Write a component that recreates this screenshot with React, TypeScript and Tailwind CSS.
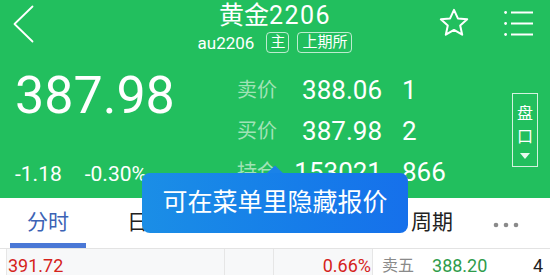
const QUOTES = [
  { label: '卖价', price: '388.06', vol: '1' },
  { label: '买价', price: '387.98', vol: '2' },
  { label: '持仓', price: '153021', vol: '866' },
]

const TABS = ['分时', '日K', '周K', '月K', '周期']

function BackIcon() {
  return (
    <svg width="22" height="38" viewBox="0 0 22 38" fill="none">
      <polyline points="19.5,1.5 1.5,19 19.5,36.5" stroke="white" strokeWidth="1.8" strokeLinecap="round" strokeLinejoin="round" />
    </svg>
  )
}

function StarIcon() {
  return (
    <svg width="32" height="30" viewBox="0 0 32 30" fill="none">
      <path
        d="M16 1.8 L19.9 10.4 L29.2 11.3 L22.2 17.5 L24.2 26.7 L16 21.9 L7.8 26.7 L9.8 17.5 L2.8 11.3 L12.1 10.4 Z"
        stroke="white"
        strokeWidth="2"
        strokeLinejoin="round"
      />
    </svg>
  )
}

function MenuIcon() {
  return (
    <svg width="30" height="26" viewBox="0 0 30 26" fill="none">
      <circle cx="1.6" cy="1.5" r="1.4" fill="white" />
      <circle cx="1.6" cy="12.5" r="1.4" fill="white" />
      <circle cx="1.6" cy="23.5" r="1.4" fill="white" />
      <line x1="7" y1="1.5" x2="29" y2="1.5" stroke="white" strokeWidth="2" />
      <line x1="7" y1="12.5" x2="29" y2="12.5" stroke="white" strokeWidth="2" />
      <line x1="7" y1="23.5" x2="29" y2="23.5" stroke="white" strokeWidth="2" />
    </svg>
  )
}

export default function App() {
  return (
    <div className="relative w-[550px] h-[275px] overflow-hidden bg-white [font-family:Roboto,'Noto_Sans_CJK_SC',sans-serif]">
      {/* 绿色行情头 */}
      <header className="h-[198px] bg-[#22bf5e] text-white">
        <div className="grid grid-cols-[1fr_auto_1fr] h-[60px]">
          <div className="pl-[13px] pt-[5px]">
            <BackIcon />
          </div>
          <div className="flex flex-col items-center pt-[2px]">
            <div className="text-[25px] leading-[28px]">
              黄金<span className="tracking-[1.5px]">2206</span>
            </div>
            <div className="mt-[2px] flex items-center gap-[8px]">
              <span className="text-[17px] leading-[20px] mr-[4px]">au2206</span>
              <span className="h-[21px] px-[3px] border border-white/70 rounded-[4px] text-[15px] leading-[19px]">主</span>
              <span className="h-[21px] px-[4px] border border-white/70 rounded-[4px] text-[15px] leading-[19px]">上期所</span>
            </div>
          </div>
          <div className="flex justify-end items-start pt-[8px] pr-[16px] gap-[34px]">
            <StarIcon />
            <div className="mt-[3px]">
              <MenuIcon />
            </div>
          </div>
        </div>

        <div className="flex h-[138px]">
          <div className="w-[237px] pl-[15px] pt-[10px]">
            <div className="text-[52px] leading-[52px]">387.98</div>
            <div className="mt-[42px] flex gap-[23px] text-[21px] leading-[21px]">
              <span>-1.18</span>
              <span>-0.30%</span>
            </div>
          </div>

          <div className="pt-[10px]">
            {QUOTES.map((q) => (
              <div key={q.label} className="flex h-[41px] items-center">
                <span className="w-[41px] text-[20px] leading-[41px] text-[#a0e3b6]">{q.label}</span>
                <span className="w-[104px] text-right text-[26px] leading-[41px]">{q.price}</span>
                <span className="ml-[20px] text-[26px] leading-[41px]">{q.vol}</span>
              </div>
            ))}
          </div>

          <div className="ml-auto mr-[12px] mt-[33px] self-start w-[26px] h-[74px] border border-white/80 flex flex-col items-center pt-[12px]">
            <span className="text-[16px] leading-[16px]">盘</span>
            <span className="mt-[7px] text-[16px] leading-[16px]">口</span>
            <span className="mt-[8px] w-0 h-0 border-l-[5px] border-r-[5px] border-t-[6px] border-l-transparent border-r-transparent border-t-white/90" />
          </div>
        </div>
      </header>

      {/* 周期切换 */}
      <nav className="flex h-[51px] border-b border-[#e3e3e3]">
        {TABS.map((t, i) => (
          <div key={t} className="w-[96px] flex flex-col items-center pt-[11px]">
            <span className={`text-[21px] leading-[26px] ${i === 0 ? 'text-[#3c63b5]' : 'text-[#222]'}`}>{t}</span>
            {i === 0 && <span className="mt-[8px] w-[76px] h-[5px] bg-[#4a78d6]" />}
          </div>
        ))}
        <div className="flex-1 flex pl-[13px] pt-[24px]">
          <svg width="26" height="6" viewBox="0 0 26 6">
            <circle cx="3" cy="3" r="2.3" fill="#8a8a8a" />
            <circle cx="13" cy="3" r="2.3" fill="#8a8a8a" />
            <circle cx="23" cy="3" r="2.3" fill="#8a8a8a" />
          </svg>
        </div>
      </nav>

      {/* 盘口明细 */}
      <div className="flex h-[30px] text-[18px] leading-[30px]">
        <div className="ml-[6px] w-[367px] flex bg-[#f7f8f9] border-l border-r border-[#e6e6e6]">
          <div className="w-[218px] pl-[1px] pt-[2px] text-[#d5231c] border-r border-[#e6e6e6]">391.72</div>
          <div className="w-[49px] border-r border-[#e6e6e6]" />
          <div className="flex-1 pt-[2px] pr-[1px] text-right text-[#d5231c]">0.66%</div>
        </div>
        <div className="flex-1 flex pt-[2px]">
          <span className="ml-[9px] text-[16px] text-[#8a8a8a]">卖五</span>
          <span className="ml-[18px] text-[#2f9c4b]">388.20</span>
          <span className="ml-auto mr-[7px] text-[#222]">4</span>
        </div>
      </div>

      {/* 提示气泡 */}
      <svg className="absolute left-[266px] top-[165px]" width="18" height="9" viewBox="0 0 18 9">
        <polygon points="0,9 9,0.5 18,9" fill="#1a82e8" />
      </svg>
      <div className="absolute left-[142px] top-[173px] w-[266px] h-[60px] rounded-[8px] bg-linear-to-r from-[#1b8ee6] to-[#1670eb] flex items-center justify-center text-white text-[25px] leading-[30px]">
        可在菜单里隐藏报价
      </div>
    </div>
  )
}
